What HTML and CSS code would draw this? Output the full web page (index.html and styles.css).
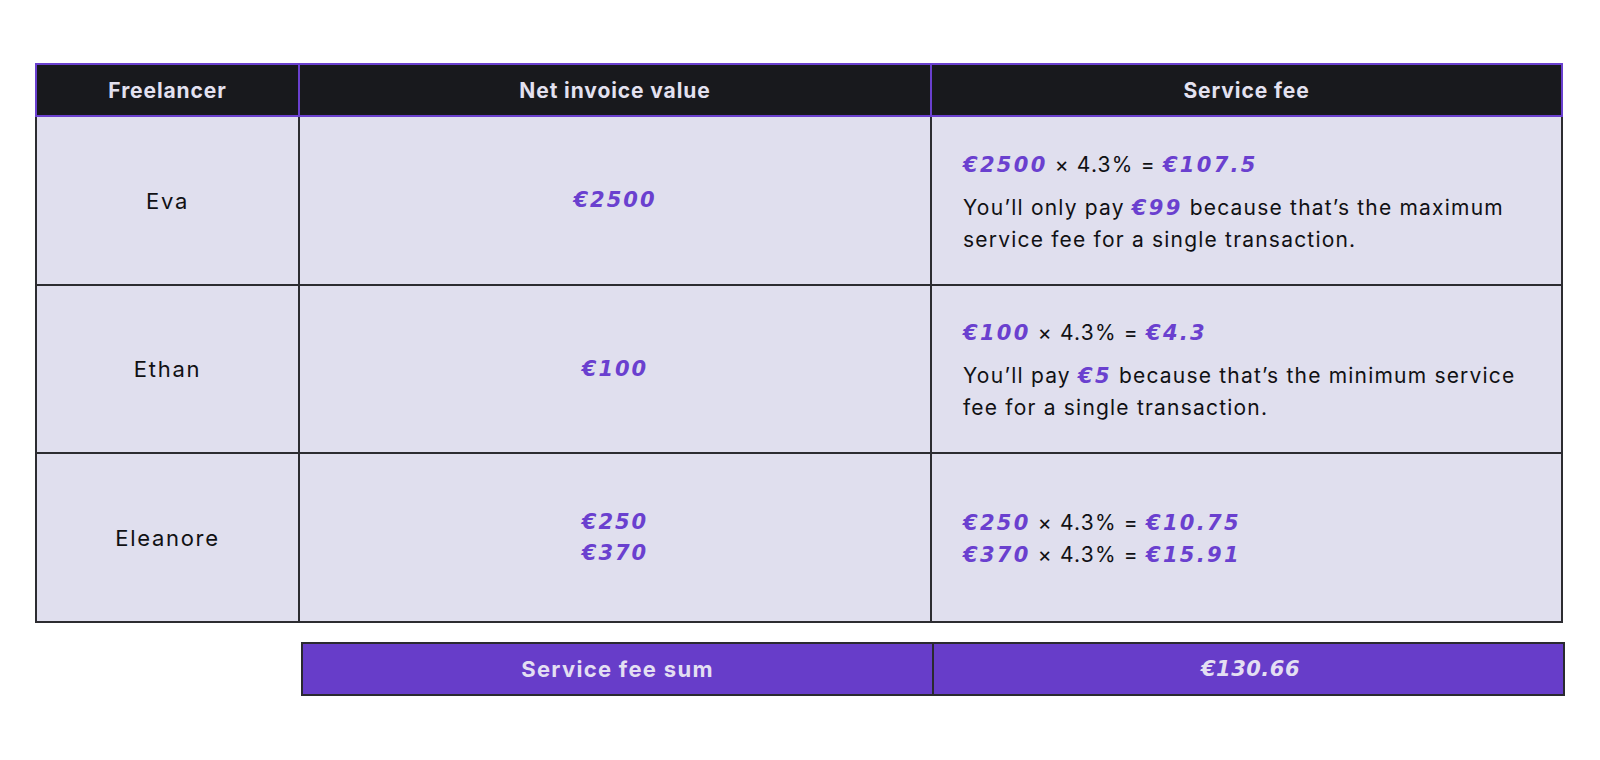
FILE: index.html
```html
<!DOCTYPE html>
<html lang="en">
<head>
<meta charset="utf-8">
<title>Service fee</title>
<link rel="stylesheet" href="styles.css">
</head>
<body>
<main class="page">
  <div class="fee-table">
    <div class="cell head first">Freelancer</div>
    <div class="cell head">Net invoice value</div>
    <div class="cell head">Service fee</div>

    <div class="cell name first">Eva</div>
    <div class="cell value"><span class="amt">€2500</span></div>
    <div class="cell fee">
      <p class="formula"><span class="amt">€2500</span> × 4.3% = <span class="amt">€107.5</span></p>
      <p class="note">You’ll only pay <span class="amt">€99</span> because that’s the maximum service fee for a single transaction.</p>
    </div>

    <div class="cell name first">Ethan</div>
    <div class="cell value"><span class="amt">€100</span></div>
    <div class="cell fee">
      <p class="formula"><span class="amt">€100</span> × 4.3% = <span class="amt">€4.3</span></p>
      <p class="note">You’ll pay <span class="amt">€5</span> because that’s the minimum service fee for a single transaction.</p>
    </div>

    <div class="cell name first">Eleanore</div>
    <div class="cell value"><span class="amt">€250</span><span class="amt">€370</span></div>
    <div class="cell fee">
      <p class="formula"><span class="amt">€250</span> × 4.3% = <span class="amt">€10.75</span></p>
      <p class="formula"><span class="amt">€370</span> × 4.3% = <span class="amt">€15.91</span></p>
    </div>
  </div>

  <div class="sum-bar">
    <div class="sum-cell">Service fee sum</div>
    <div class="sum-cell total">€130.66</div>
  </div>
</main>
</body>
</html>
```
FILE: styles.css
```css
* { box-sizing: border-box; }

html, body {
  margin: 0;
  padding: 0;
  background: #ffffff;
}

body {
  font-family: Inter, "Liberation Sans", sans-serif;
  color: #111114;
}

.page {
  padding: 63px 0 0 35px;
}

.fee-table {
  display: grid;
  grid-template-columns: 265px 632px 631px;
  grid-template-rows: 54px 169px 168px 169px;
  width: 1528px;
}

.cell {
  border-right: 2px solid #2c2c31;
  border-bottom: 2px solid #2c2c31;
  background: #e0dfee;
  display: flex;
  flex-direction: column;
  justify-content: center;
}

.cell.first {
  border-left: 2px solid #2c2c31;
}

.cell.head {
  background: #18191d;
  color: #e3e1f0;
  border-color: #6a40cf;
  border-top: 2px solid #6a40cf;
  font-weight: 700;
  font-size: 21px;
  letter-spacing: 0.9px;
  align-items: center;
  text-align: center;
}

.cell.head.first {
  border-left-color: #6a40cf;
}

.cell.name {
  align-items: center;
  font-size: 22px;
  letter-spacing: 1.7px;
}

.cell.value {
  align-items: center;
  font-size: 21px;
  line-height: 31px;
}

.amt {
  font-family: "DejaVu Sans", Verdana, sans-serif;
  color: #6a40cf;
  font-weight: 700;
  font-style: italic;
  letter-spacing: 2px;
}

.cell.fee {
  padding: 2px 20px 0 31px;
  font-size: 21px;
  line-height: 31px;
  letter-spacing: 1.2px;
}

.cell.fee .amt {
  letter-spacing: 2.3px;
}

.cell.fee p {
  margin: 0;
}

.cell.fee .note {
  margin-top: 11px;
  max-width: 575px;
}

.sum-bar {
  display: grid;
  grid-template-columns: 631px 633px;
  height: 54px;
  width: 1264px;
  margin: 19px 0 0 266px;
  background: #673dc9;
  border: 2px solid #2a2a30;
}

.sum-cell {
  display: flex;
  align-items: center;
  justify-content: center;
  color: #e3dff2;
  font-size: 22px;
  font-weight: 700;
  letter-spacing: 1.3px;
}

.sum-cell:first-child {
  border-right: 2px solid #2a2a30;
}

.sum-cell.total {
  font-family: "DejaVu Sans", Verdana, sans-serif;
  font-style: italic;
  font-weight: 700;
  font-size: 21px;
  letter-spacing: 0.5px;
}
```
